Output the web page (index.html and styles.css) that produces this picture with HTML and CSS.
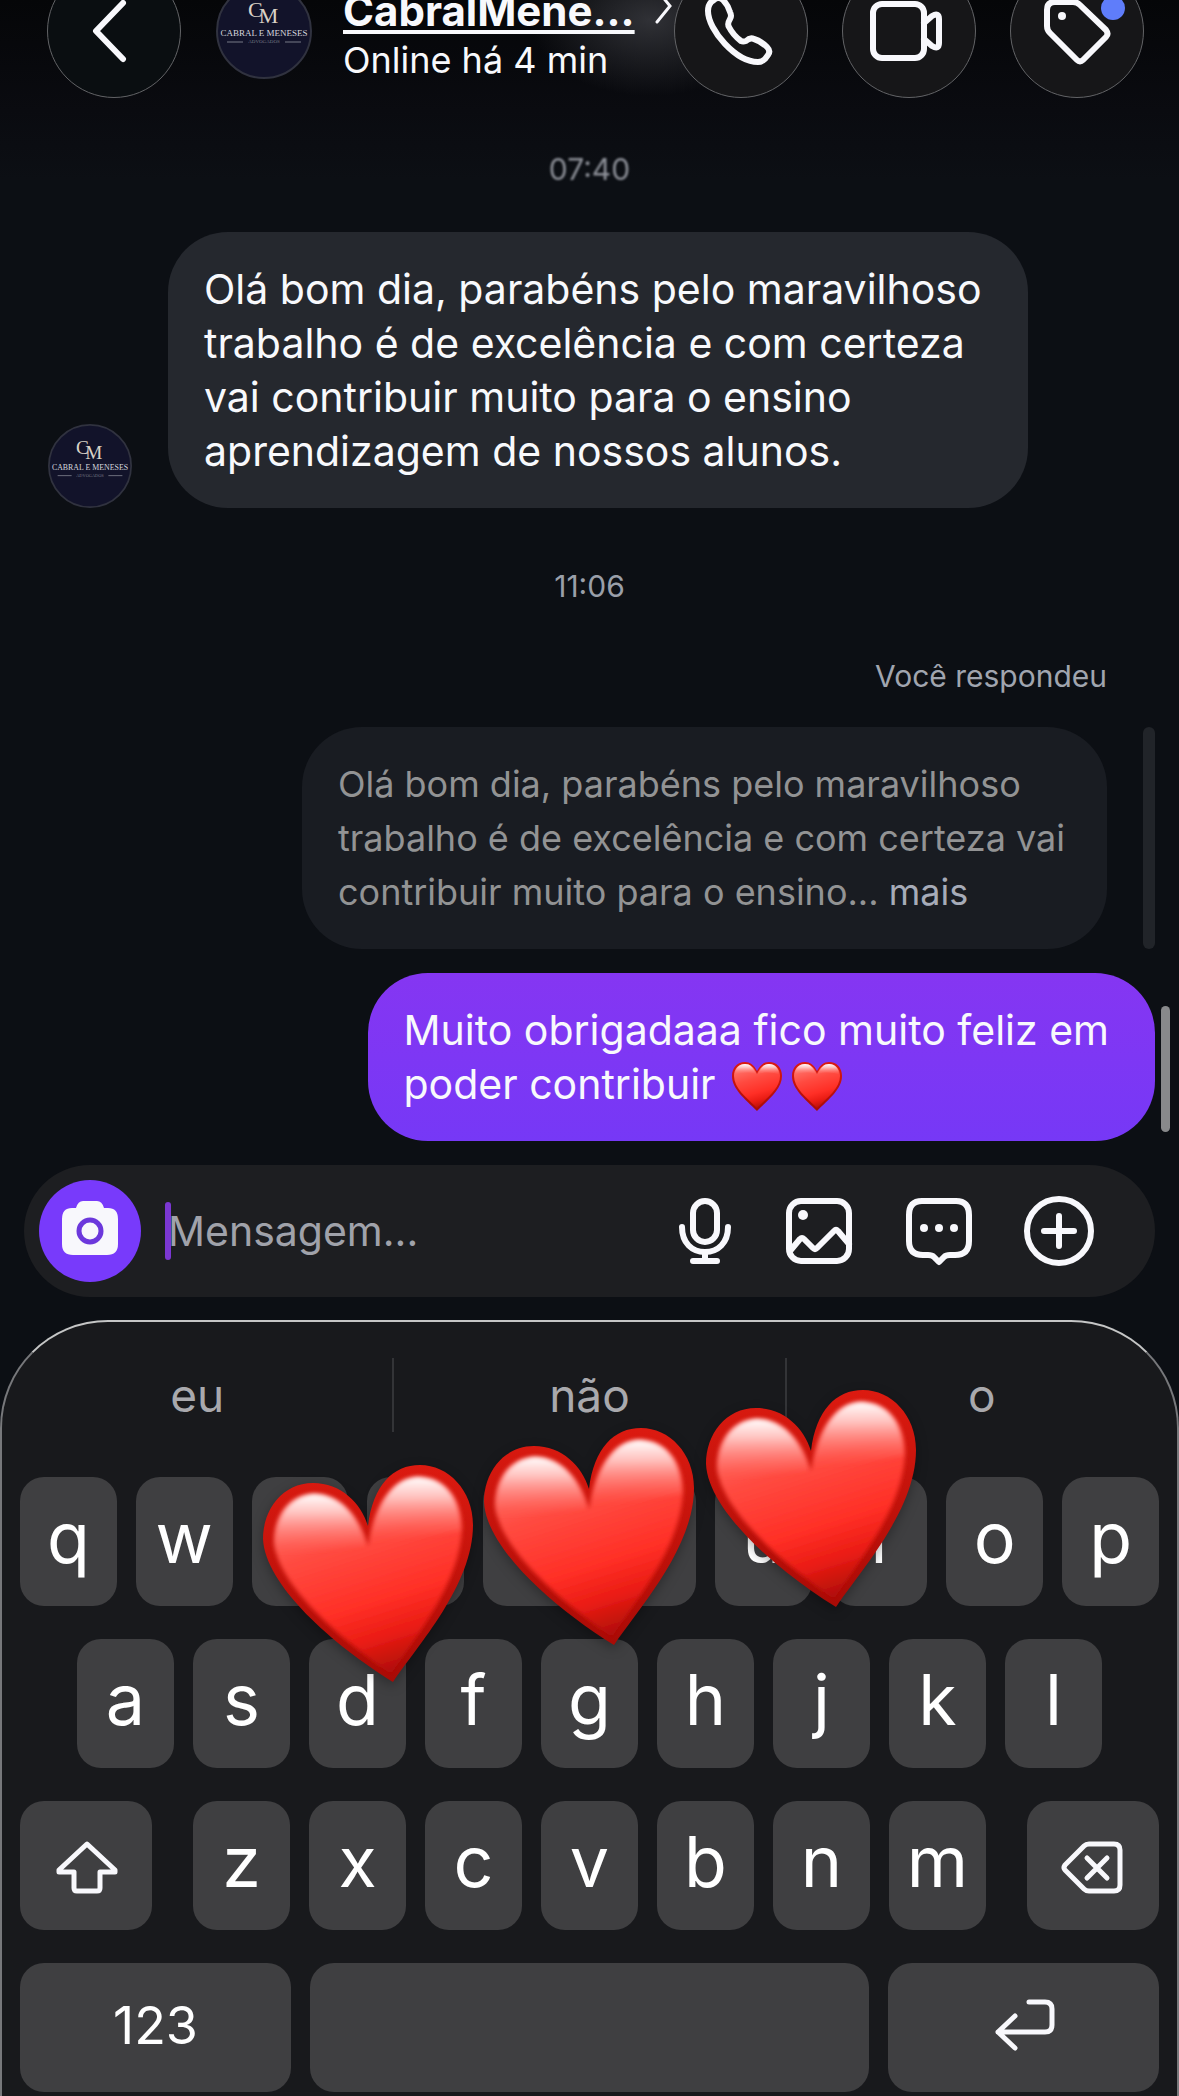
FILE: index.html
```html
<!DOCTYPE html>
<html lang="pt-BR">
<head>
    <meta charset="UTF-8">
    <meta name="viewport" content="width=device-width, initial-scale=1.0">
    <title>CabralMeneses</title>
    <link rel="stylesheet" href="styles.css">
</head>
<body>
    <!-- Shared drawings -->
    <svg class="defs" aria-hidden="true">
        <defs>
            <linearGradient id="face" x1="0.3" y1="0" x2="0.6" y2="1">
                <stop offset="0" stop-color="#ff7a72"/>
                <stop offset="0.35" stop-color="#ff4a40"/>
                <stop offset="0.65" stop-color="#ff2f26"/>
                <stop offset="0.82" stop-color="#ea1c14"/>
                <stop offset="1" stop-color="#b00d08"/>
            </linearGradient>
            <linearGradient id="rim" x1="0" y1="0" x2="0" y2="1">
                <stop offset="0" stop-color="#dc1a10"/>
                <stop offset="1" stop-color="#a80b06"/>
            </linearGradient>
            <linearGradient id="shine" x1="0" y1="0" x2="0" y2="1">
                <stop offset="0" stop-color="#fff" stop-opacity="1"/>
                <stop offset="0.3" stop-color="#ffdcda" stop-opacity="0.8"/>
                <stop offset="1" stop-color="#ff6a62" stop-opacity="0"/>
            </linearGradient>
            <filter id="soft" x="-10%" y="-10%" width="120%" height="120%">
                <feGaussianBlur stdDeviation="2"/>
            </filter>
            <clipPath id="heartClip">
                <path d="M105 61C98 38 78 18 50 18C20 18 0 44 0 74C2 120 70 180 130 217C155 180 210 120 210 60C210 25 185 0 157 0C130 0 110 20 105 61Z"/>
            </clipPath>
        </defs>
        <symbol id="big-heart" viewBox="0 0 210 217">
            <path fill="url(#rim)" d="M105 61C98 38 78 18 50 18C20 18 0 44 0 74C2 120 70 180 130 217C155 180 210 120 210 60C210 25 185 0 157 0C130 0 110 20 105 61Z"/>
            <g clip-path="url(#heartClip)">
                <path fill="url(#face)" filter="url(#soft)" d="M105 81C97 50 76 29 52 29C26 29 11 50 11 77C15 120 75 172 128 209C153 172 198 116 199 62C199 32 180 12 156 12C130 12 111 38 105 81Z"/>
                <path fill="url(#shine)" filter="url(#soft)" d="M12 90C10 52 26 31 51 29C78 30 95 52 103 80C80 84 35 88 12 90Z"/>
                <path fill="url(#shine)" filter="url(#soft)" d="M107 78C114 36 132 13 155 12C180 13 197 30 198 66C175 70 135 74 107 78Z"/>
            </g>
        </symbol>
        <symbol id="heart" viewBox="0 0 50 50">
            <path fill="url(#rim)" d="M25 10C22 4 18 1 13 1C5 1 0 7 0 15C0 28 13 38 25 50C37 38 50 28 50 15C50 7 45 1 37 1C32 1 28 4 25 10Z"/>
            <path fill="url(#face)" d="M25 13C22 6 18 3 13 3C6 3 2 8 2 15C2 27 14 36 25 47C36 36 48 27 48 15C48 8 44 3 37 3C32 3 28 6 25 13Z"/>
            <path fill="url(#shine)" d="M3 14C3 7 7 3 13 3C18 3 21 6 24 13C18 11 8 11 3 14ZM26 13C29 6 32 3 37 3C43 3 47 7 47 14C42 11 32 11 26 13Z"/>
        </symbol>
        <symbol id="logo" viewBox="0 0 96 96">
            <circle cx="48" cy="48" r="47" fill="#12132a" stroke="#30323f" stroke-width="2"/>
            <text class="logo-mark" x="32" y="34">C<tspan dx="-4" dy="6">M</tspan></text>
            <text class="logo-name" x="48" y="53" text-anchor="middle">CABRAL E MENESES</text>
            <text class="logo-sub" x="48" y="60" text-anchor="middle">ADVOGADOS</text>
            <path d="M11 59H27M69 59H85" stroke="#777a86" stroke-width="1"/>
        </symbol>
    </svg>

    <header class="header">
        <button class="round back" aria-label="Voltar">
            <svg class="icon" viewBox="0 0 80 80"><path d="M49 12L22 40L49 68"/></svg>
        </button>
        <svg class="avatar" role="img" aria-label="Cabral e Meneses"><use href="#logo"/></svg>
        <div class="contact">
            <a class="name" href="#">CabralMene...</a>
            <p class="status">Online há 4 min</p>
        </div>
        <svg class="chevron" viewBox="0 0 18 36"><path d="M2 2L15 18L2 34"/></svg>
        <div class="actions">
            <button class="round" aria-label="Ligar">
                <svg class="icon" viewBox="-5 -5 80 80"><path d="M8 4Q2 7 2 15C2 34 30 66 52 66Q56 66 59 63L62 59Q65 55 61 51Q55 45 48 43Q44 41 40 45Q37 46 35 45Q27 39 23 31Q21 28 24 23Q26 20 24 16Q22 9 17 4Q12 0 8 4Z"/></svg>
            </button>
            <button class="round" aria-label="Chamada de vídeo">
                <svg class="icon" viewBox="0 0 80 80"><rect x="4" y="13" width="51" height="54" rx="9"/><path d="M55 32L63 25Q70 21 70 28V52Q70 59 63 55L55 48"/></svg>
            </button>
            <button class="round" aria-label="Etiqueta">
                <svg class="icon" viewBox="0 0 80 80"><path d="M18 11H36Q40 11 43 14L69 39Q72 43 69 46L46 69Q43 72 40 69L13 42Q10 39 10 35V19Q10 11 18 11Z"/><circle class="solid" cx="25" cy="25" r="4"/></svg>
                <span class="badge"></span>
            </button>
        </div>
    </header>

    <main class="chat">
        <time class="time faded">07:40</time>
        <div class="received">
            <svg class="avatar small" role="img" aria-label="Cabral e Meneses"><use href="#logo"/></svg>
            <p class="bubble">Olá bom dia, parabéns pelo maravilhoso<br>trabalho é de excelência e com certeza<br>vai contribuir muito para o ensino<br>aprendizagem de nossos alunos.</p>
        </div>
        <time class="time">11:06</time>
        <p class="reply-label">Você respondeu</p>
        <div class="reply">
            <p class="bubble quoted">Olá bom dia, parabéns pelo maravilhoso<br>trabalho é de excelência e com certeza vai<br>contribuir muito para o ensino... <a href="#">mais</a></p>
            <span class="reply-bar"></span>
        </div>
        <p class="bubble sent">Muito obrigadaaa fico muito feliz em<br>poder contribuir <svg class="emoji" role="img" aria-label="coração"><use href="#heart"/></svg><svg class="emoji" role="img" aria-label="coração"><use href="#heart"/></svg></p>
        <span class="scrollbar"></span>
    </main>

    <form class="composer">
        <button type="button" class="camera" aria-label="Câmera">
            <svg class="icon" viewBox="0 0 80 80"><path class="solid" d="M33 10H47Q52 10 54 17H58Q68 17 68 28V53Q68 64 57 64H23Q12 64 12 53V28Q12 17 22 17H26Q28 10 33 10Z"/><circle class="lens" cx="40" cy="40" r="11"/></svg>
        </button>
        <span class="caret"></span>
        <input type="text" class="message" placeholder="Mensagem..." aria-label="Mensagem">
        <button type="button" class="tool mic" aria-label="Áudio">
            <svg class="icon" viewBox="0 0 80 80"><rect x="28" y="10" width="24" height="41" rx="12"/><path d="M17 36C17 52 27 61 40 61S63 52 63 36M40 61V70M28 70H52"/></svg>
        </button>
        <button type="button" class="tool" aria-label="Galeria">
            <svg class="icon" viewBox="0 0 80 80"><rect x="10" y="10" width="60" height="60" rx="12"/><path d="M11 60L21 48Q23 46 25 48L34 57Q36 59 38 57L55 40Q57 38 59 40L70 53"/><circle class="solid" cx="24" cy="24" r="5"/></svg>
        </button>
        <button type="button" class="tool" aria-label="Respostas salvas">
            <svg class="icon" viewBox="0 0 80 80"><path d="M23 10H57Q70 10 70 24V50Q70 64 56 64H51Q47 64 45 66L40 71L35 66Q33 64 29 64H24Q10 64 10 50V24Q10 10 23 10Z"/><circle class="solid" cx="25" cy="37" r="4"/><circle class="solid" cx="40" cy="37" r="4"/><circle class="solid" cx="55" cy="37" r="4"/></svg>
        </button>
        <button type="button" class="tool" aria-label="Mais">
            <svg class="icon" viewBox="0 0 80 80"><circle cx="40" cy="40" r="32"/><path d="M40 25V55M25 40H55"/></svg>
        </button>
    </form>

    <section class="keyboard">
        <div class="suggestions">
            <button>eu</button>
            <button>não</button>
            <button>o</button>
        </div>
        <div class="row">
            <button class="key">q</button>
            <button class="key">w</button>
            <button class="key">e</button>
            <button class="key">r</button>
            <button class="key">t</button>
            <button class="key">y</button>
            <button class="key">u</button>
            <button class="key">i</button>
            <button class="key">o</button>
            <button class="key">p</button>
        </div>
        <div class="row middle">
            <button class="key">a</button>
            <button class="key">s</button>
            <button class="key">d</button>
            <button class="key">f</button>
            <button class="key">g</button>
            <button class="key">h</button>
            <button class="key">j</button>
            <button class="key">k</button>
            <button class="key">l</button>
        </div>
        <div class="row">
            <button class="key shift" aria-label="Maiúsculas">
                <svg class="icon thin" viewBox="0 0 80 80"><path d="M41 18L69 44V46H54V62Q54 65 51 65H31Q28 65 28 62V46H13V44Z"/></svg>
            </button>
            <button class="key">z</button>
            <button class="key">x</button>
            <button class="key">c</button>
            <button class="key">v</button>
            <button class="key">b</button>
            <button class="key">n</button>
            <button class="key">m</button>
            <button class="key delete" aria-label="Apagar">
                <svg class="icon thin" viewBox="0 0 80 80"><path d="M36 18H61Q67 18 67 24V59Q67 65 61 65H36Q33 65 31 63L12 44Q10 42 12 39L31 20Q33 18 36 18ZM34 32L54 52M54 32L34 52"/></svg>
            </button>
        </div>
        <div class="row">
            <button class="key wide">123</button>
            <button class="key space" aria-label="Espaço"></button>
            <button class="key wide" aria-label="Retorno">
                <svg class="icon thin" viewBox="0 0 80 80"><path d="M45 16H61Q68 16 68 23V39Q68 46 61 46H14M31 30L14 46L31 62"/></svg>
            </button>
        </div>
        <svg class="sticker first" role="img" aria-label="coração"><use href="#big-heart"/></svg>
        <svg class="sticker second" role="img" aria-label="coração"><use href="#big-heart"/></svg>
        <svg class="sticker third" role="img" aria-label="coração"><use href="#big-heart"/></svg>
    </section>
</body>
</html>
```
FILE: styles.css
```css
* {
    box-sizing: border-box;
    margin: 0;
    padding: 0;
}

body {
    font-family: Inter, "Liberation Sans", sans-serif;
    color: #f8f9fc;
    background: linear-gradient(#050608 0, #0a0b10 110px, #0c0f14 180px);
    min-height: 100vh;
    overflow: hidden;
    display: flex;
    flex-direction: column;
}

button, input {
    font-family: inherit;
    color: inherit;
    background: none;
    border: none;
}

button {
    cursor: pointer;
    display: flex;
    align-items: center;
    justify-content: center;
}

.defs {
    position: absolute;
    width: 0;
    height: 0;
}

.icon {
    width: 80px;
    height: 80px;
    flex: none;
    overflow: visible;
    fill: none;
    stroke: #f8f8fc;
    stroke-width: 6;
    stroke-linecap: round;
    stroke-linejoin: round;
}

.icon.thin {
    stroke-width: 5;
}

.icon .solid {
    fill: #f8f8fc;
    stroke: none;
}

/* Header, partly scrolled off the top */
.header {
    display: flex;
    align-items: center;
    margin-top: -36px;
    padding: 0 35px 0 47px;
    background: radial-gradient(ellipse 120px 76px at 650px 56px, #303136, transparent);
}

.round {
    position: relative;
    width: 134px;
    height: 134px;
    flex: none;
    border: 1px solid #626366;
    border-radius: 50%;
    background: #161618;
}

.back {
    background: #0a0e11;
    margin-right: 35px;
}

.avatar {
    width: 96px;
    height: 96px;
    flex: none;
}

.avatar.small {
    width: 84px;
    height: 84px;
}

.logo-mark {
    font-family: "Liberation Serif", serif;
    font-size: 22px;
    fill: #d9d2c6;
}

.logo-name {
    font-family: "Liberation Serif", serif;
    font-size: 9px;
    fill: #d6d7de;
}

.logo-sub {
    font-family: "Liberation Serif", serif;
    font-size: 5px;
    fill: #777a86;
}

.contact {
    margin-left: 31px;
    padding-top: 7px;
}

.name {
    display: block;
    font-size: 42px;
    line-height: 50px;
    font-weight: 700;
    color: inherit;
    text-decoration: underline;
    text-decoration-thickness: 4px;
    text-underline-offset: 4px;
}

.status {
    font-size: 36px;
    line-height: 48px;
}

.chevron {
    width: 18px;
    height: 36px;
    margin: 0 0 50px 20px;
    fill: none;
    stroke: #f8f8fc;
    stroke-width: 3;
    stroke-linecap: round;
}

.actions {
    display: flex;
    gap: 34px;
    margin-left: auto;
}

.badge {
    position: absolute;
    top: 31px;
    right: 18px;
    width: 24px;
    height: 24px;
    border-radius: 50%;
    background: #5f7dfa;
}

/* Conversation */
.chat {
    position: relative;
    display: flex;
    flex-direction: column;
    padding: 51px 24px 24px 48px;
}

.time {
    align-self: center;
    padding-right: 24px;
    font-size: 30px;
    line-height: 40px;
    color: #9a9fa9;
}

.faded {
    color: #8d9098;
    filter: blur(1px);
}

.received {
    display: flex;
    align-items: flex-end;
    gap: 36px;
    margin: 43px 0 58px;
}

.bubble {
    padding: 30px 36px;
    border-radius: 60px;
    font-size: 41px;
    line-height: 54px;
    background: #25282e;
}

.received .bubble {
    padding-right: 46px;
}

.reply-label {
    align-self: flex-end;
    margin: 50px 48px 31px 0;
    font-size: 30px;
    line-height: 40px;
    color: #a0a5af;
}

.reply {
    display: flex;
    justify-content: flex-end;
    gap: 36px;
}

.quoted {
    font-size: 36px;
    color: #929394;
    background: #191c22;
    padding-right: 42px;
}

.quoted a {
    color: #a6abb8;
    text-decoration: none;
}

.reply-bar {
    width: 12px;
    border-radius: 6px;
    background: #212429;
}

.sent {
    align-self: flex-end;
    margin-top: 24px;
    padding-right: 46px;
    background: linear-gradient(#8536f2, #7638f6);
}

.emoji {
    width: 50px;
    height: 50px;
    margin: 0 5px;
    vertical-align: -12px;
}

.scrollbar {
    position: absolute;
    right: 9px;
    bottom: 33px;
    width: 9px;
    height: 126px;
    border-radius: 5px;
    background: #88898b;
}

/* Message box */
.composer {
    display: flex;
    align-items: center;
    height: 132px;
    margin: 0 24px;
    padding: 0 56px 0 15px;
    border-radius: 66px;
    background: #1d1e21;
}

.camera {
    width: 102px;
    height: 102px;
    flex: none;
    border-radius: 50%;
    background: #783afb;
}

.lens {
    stroke: #6c38dc;
    stroke-width: 5;
}

.caret {
    width: 6px;
    height: 58px;
    flex: none;
    margin: 0 -3px 0 24px;
    border-radius: 3px;
    background: #7b37d2;
}

.message {
    flex: 1;
    min-width: 0;
    font-size: 41px;
    line-height: 54px;
    outline: none;
}

.message::placeholder {
    color: #a0a2aa;
}

.tool {
    width: 80px;
    height: 80px;
    margin-left: 40px;
}

.mic {
    width: 68px;
    margin-left: 0;
}

/* Keyboard */
.keyboard {
    position: relative;
    flex: 1;
    margin-top: 23px;
    padding-bottom: 4px;
    border: 2px solid #77787b;
    border-top-color: #c5c6c6;
    border-bottom: none;
    border-radius: 108px 108px 0 0;
    background: #18191c;
}

.suggestions {
    display: flex;
    padding: 36px 0 45px;
}

.suggestions button {
    flex: 1;
    height: 74px;
    font-size: 46px;
    color: #a9a9ad;
}

.suggestions button + button {
    border-left: 2px solid #333437;
}

.row {
    display: flex;
    gap: 19px;
    padding: 0 18px;
}

.row + .row {
    margin-top: 33px;
}

.row.middle {
    padding: 0 75px;
}

.key {
    flex: 1;
    height: 129px;
    min-width: 0;
    border-radius: 24px;
    font-size: 70px;
    padding-bottom: 8px;
    color: #fff;
    background: #3f3f41;
}

.shift, .delete {
    flex: 0 0 132px;
    padding-bottom: 0;
}

.shift {
    margin-right: 22px;
}

.delete {
    margin-left: 22px;
}

.wide {
    flex: 0 0 271px;
    padding-bottom: 4px;
    font-size: 52px;
}

/* Hearts over the keys */
.sticker {
    position: absolute;
    width: 210px;
    height: 217px;
    filter: drop-shadow(0 4px 6px rgba(0, 0, 0, 0.3));
}

.first {
    top: 143px;
    left: 261px;
}

.second {
    top: 106px;
    left: 482px;
}

.third {
    top: 68px;
    left: 704px;
}
```
